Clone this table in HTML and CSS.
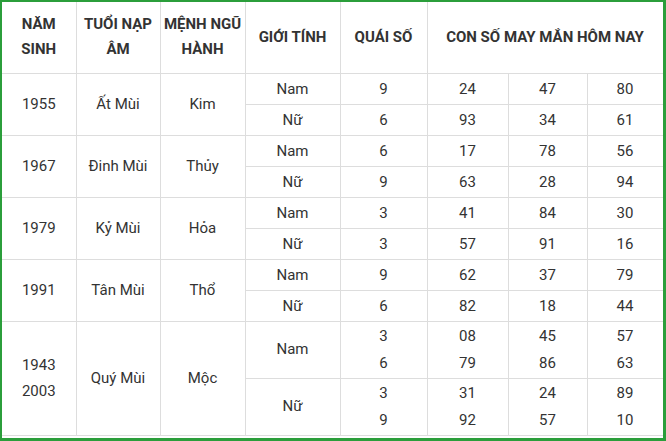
FILE: index.html
```html
<!DOCTYPE html>
<html lang="vi">
<head>
<meta charset="utf-8">
<link rel="stylesheet" href="styles.css">
</head>
<body>
<div class="frame">
<table class="luck">
<colgroup>
<col class="c1"><col class="c2"><col class="c3"><col class="c4"><col class="c5"><col class="c6"><col class="c7"><col class="c8">
</colgroup>
<thead>
<tr class="head">
<th>NĂM<br>SINH</th>
<th>TUỔI NẠP<br>ÂM</th>
<th>MỆNH NGŨ<br>HÀNH</th>
<th>GIỚI TÍNH</th>
<th>QUÁI SỐ</th>
<th colspan="3">CON SỐ MAY MẮN HÔM NAY</th>
</tr>
</thead>
<tbody>
<tr class="r"><td rowspan="2">1955</td><td rowspan="2">Ất Mùi</td><td rowspan="2">Kim</td><td>Nam</td><td>9</td><td>24</td><td>47</td><td>80</td></tr>
<tr class="r"><td>Nữ</td><td>6</td><td>93</td><td>34</td><td>61</td></tr>
<tr class="r"><td rowspan="2">1967</td><td rowspan="2">Đinh Mùi</td><td rowspan="2">Thủy</td><td>Nam</td><td>6</td><td>17</td><td>78</td><td>56</td></tr>
<tr class="r"><td>Nữ</td><td>9</td><td>63</td><td>28</td><td>94</td></tr>
<tr class="r"><td rowspan="2">1979</td><td rowspan="2">Kỷ Mùi</td><td rowspan="2">Hỏa</td><td>Nam</td><td>3</td><td>41</td><td>84</td><td>30</td></tr>
<tr class="r"><td>Nữ</td><td>3</td><td>57</td><td>91</td><td>16</td></tr>
<tr class="r"><td rowspan="2">1991</td><td rowspan="2">Tân Mùi</td><td rowspan="2">Thổ</td><td>Nam</td><td>9</td><td>62</td><td>37</td><td>79</td></tr>
<tr class="r"><td>Nữ</td><td>6</td><td>82</td><td>18</td><td>44</td></tr>
<tr class="tall"><td rowspan="2">1943<br>2003</td><td rowspan="2">Quý Mùi</td><td rowspan="2">Mộc</td><td>Nam</td><td>3<br>6</td><td>08<br>79</td><td>45<br>86</td><td>57<br>63</td></tr>
<tr class="tall"><td>Nữ</td><td>3<br>9</td><td>31<br>92</td><td>24<br>57</td><td>89<br>10</td></tr>
</tbody>
</table>
</div>
</body>
</html>
```

FILE: styles.css
```css
html, body {
  margin: 0;
  padding: 0;
  background: #fff;
}
.frame {
  box-sizing: border-box;
  width: 666px;
  height: 441px;
  border-style: solid;
  border-color: #2b9e3b;
  border-width: 2px 3px 3px 2px;
  overflow: hidden;
  background: #fff;
}
.luck {
  width: 661px;
  border-collapse: collapse;
  table-layout: fixed;
  font-family: Roboto, "Liberation Sans", sans-serif;
  font-size: 15px;
  color: #333;
}
.c1 { width: 74px; }
.c2 { width: 84px; }
.c3 { width: 85px; }
.c4 { width: 95px; }
.c5 { width: 87px; }
.c6 { width: 81px; }
.c7 { width: 79px; }
.c8 { width: 76px; }
.luck th,
.luck td {
  border: 1px solid #dddddd;
  text-align: center;
  vertical-align: middle;
  padding: 0;
  line-height: 26px;
}
.luck th {
  font-weight: 700;
  line-height: 25px;
  color: #333;
}
.luck thead th {
  border-top: none;
}
.luck tr > :first-child {
  border-left: none;
}
.head { height: 71px; }
.r { height: 31px; }
.tall { height: 57px; }
.tall td { line-height: 27px; }
.tall td[rowspan] { line-height: 26px; }
```
